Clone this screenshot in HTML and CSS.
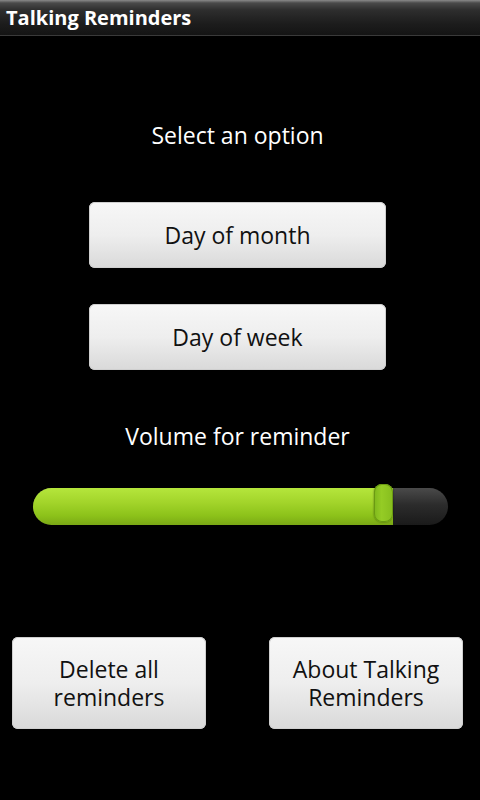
FILE: index.html
```html
<!DOCTYPE html>
<html>
<head>
<meta charset="utf-8">
<link rel="stylesheet" href="styles.css">
</head>
<body>
<div class="titlebar">Talking Reminders</div>
<main class="content">
  <div class="label first">Select an option</div>
  <button class="btn wide">Day of month</button>
  <button class="btn wide second">Day of week</button>
  <div class="label vol">Volume for reminder</div>
  <div class="slider">
    <div class="fill" style="width: 360px"></div>
    <div class="thumb" style="left: 341px"></div>
  </div>
  <div class="bottom">
    <button class="btn half">Delete all<br>reminders</button>
    <button class="btn half">About Talking<br>Reminders</button>
  </div>
</main>
</body>
</html>
```
FILE: styles.css
```css
html, body {
  margin: 0;
  padding: 0;
  background: #000;
  width: 480px;
  height: 800px;
  overflow: hidden;
  font-family: "Open Sans", "DejaVu Sans", sans-serif;
}
.titlebar {
  height: 36px;
  box-sizing: border-box;
  background: linear-gradient(to bottom, #8a8a8a 0px, #4a4a4a 3px, #2e2e2e 10px, #1c1c1c 24px, #141414 35px);
  border-bottom: 1px solid #3a3a3a;
  color: #fff;
  font-weight: bold;
  font-size: 20px;
  line-height: 36px;
  padding-left: 6px;
}
.content {
  width: 475px;
  display: flex;
  flex-direction: column;
  align-items: center;
}
.label {
  color: #fff;
  font-size: 23px;
  line-height: 30px;
}
.label.first { margin-top: 84px; }
.btn {
  font-family: inherit;
  font-size: 23px;
  color: #111;
  border: none;
  border-radius: 6px;
  background: linear-gradient(to bottom, #f7f7f7 0%, #eeeeee 50%, #d9d9d9 100%);
  box-shadow: inset 0 0 0 1px #cfcfcf;
  padding: 0;
  cursor: pointer;
}
.btn.wide {
  width: 297px;
  height: 66px;
  margin-top: 52px;
}
.btn.second { margin-top: 36px; }
.label.vol { margin-top: 51px; }
.slider {
  position: relative;
  width: 415px;
  height: 37px;
  margin-top: 37px;
  margin-left: 6px;
  border-radius: 18.5px;
  background: linear-gradient(to bottom, #4a4a4a 0%, #2c2c2c 45%, #1a1a1a 100%);
}
.fill {
  height: 37px;
  border-radius: 18.5px 0 0 18.5px;
  background: linear-gradient(to bottom, #b5e63c 0%, #a2d42a 40%, #8cc21a 75%, #7aa815 100%);
}
.thumb {
  position: absolute;
  top: -4px;
  width: 19px;
  height: 38px;
  border-radius: 8px;
  background: linear-gradient(to right, #7fb81c 0%, #95cc25 40%, #86bd1e 100%);
  box-shadow: inset 0 0 0 1px #6a9a12, 0 0 2px rgba(0,0,0,0.5);
}
.bottom {
  width: 480px;
  display: flex;
  justify-content: space-between;
  padding: 0 17px 0 12px;
  box-sizing: border-box;
  margin-top: 112px;
  align-self: flex-start;
}
.btn.half {
  width: 194px;
  height: 92px;
  line-height: 28px;
}
```
